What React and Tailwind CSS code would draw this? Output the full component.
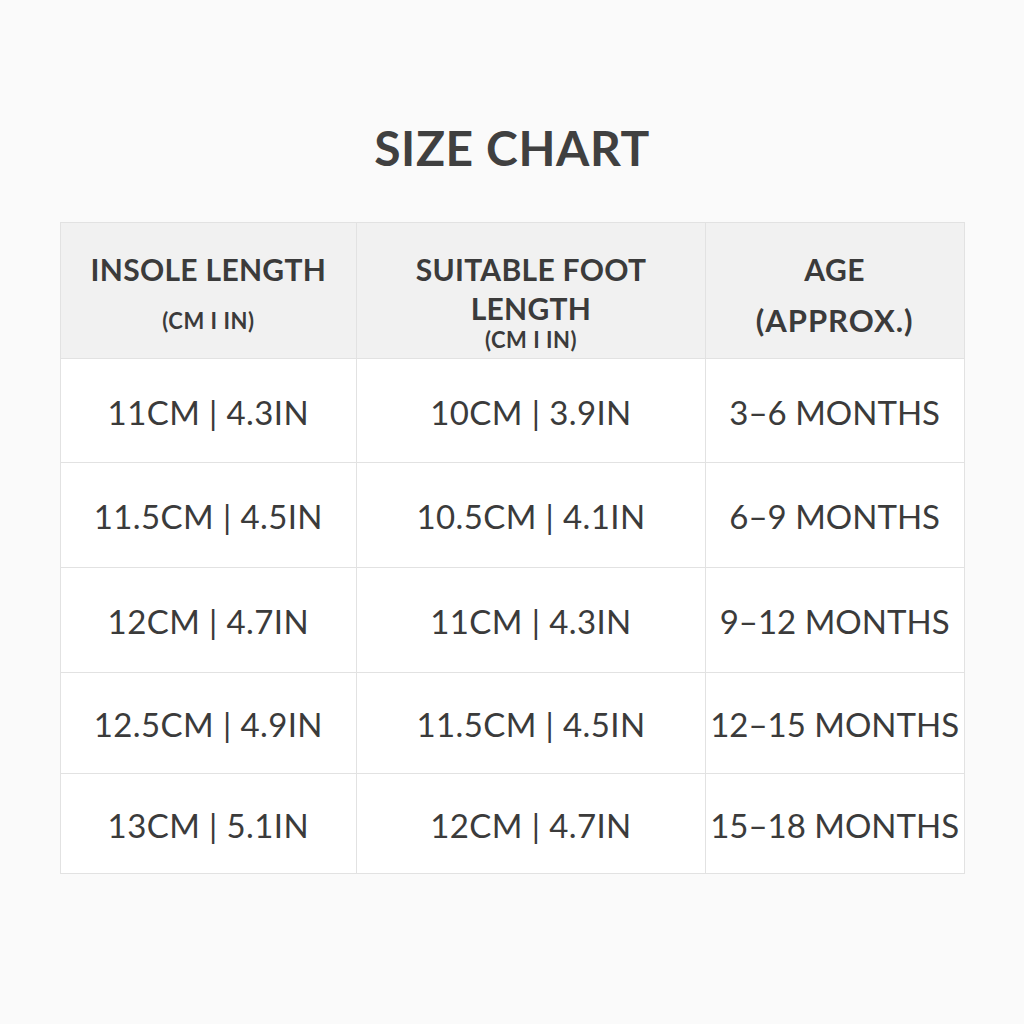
import React from "react";

const rows = [
  { h: "h-[104px]", c: ["11CM | 4.3IN", "10CM | 3.9IN", "3–6 MONTHS"] },
  { h: "h-[105px]", c: ["11.5CM | 4.5IN", "10.5CM | 4.1IN", "6–9 MONTHS"] },
  { h: "h-[105px]", c: ["12CM | 4.7IN", "11CM | 4.3IN", "9–12 MONTHS"] },
  { h: "h-[101px]", c: ["12.5CM | 4.9IN", "11.5CM | 4.5IN", "12–15 MONTHS"] },
  { h: "h-[99px]", c: ["13CM | 5.1IN", "12CM | 4.7IN", "15–18 MONTHS"] },
];

const cols = ["w-[297px]", "w-[349px]", "w-[258px]"];

const App = () => {
  return (
    <div
      className="w-[1024px] h-[1024px] bg-[#fafafa] text-[#3b3b3b] flex flex-col items-center"
      style={{ fontFamily: "Lato, 'Open Sans', sans-serif" }}
    >
      <h1 className="mt-[124px] text-[48px] font-bold leading-none tracking-[0.6px] text-[#404040]">
        SIZE CHART
      </h1>

      <div className="mt-[50px] w-[905px] border border-[#e2e2e2] bg-white">
        <div className="flex h-[136px] bg-[#f1f1f1] border-b border-[#e2e2e2]">
          <div className={`${cols[0]} border-r border-[#e2e2e2] flex flex-col items-center pt-[31px]`}>
            <span className="text-[30px] font-bold leading-none tracking-[0.3px]">INSOLE LENGTH</span>
            <span className="mt-[26px] text-[22px] font-bold leading-none tracking-[0.5px]">(CM I IN)</span>
          </div>
          <div className={`${cols[1]} border-r border-[#e2e2e2] flex flex-col items-center pt-[31px]`}>
            <span className="text-[30px] font-bold leading-none tracking-[0.3px]">SUITABLE FOOT</span>
            <span className="mt-[9px] text-[30px] font-bold leading-none tracking-[0.3px]">LENGTH</span>
            <span className="mt-[6px] text-[22px] font-bold leading-none tracking-[0.5px]">(CM I IN)</span>
          </div>
          <div className={`${cols[2]} flex flex-col items-center pt-[31px]`}>
            <span className="text-[30px] font-bold leading-none tracking-[0.5px]">AGE</span>
            <span className="mt-[21px] text-[31px] font-bold leading-none tracking-[1px]">(APPROX.)</span>
          </div>
        </div>

        {rows.map((r, i) => (
          <div
            key={i}
            className={`flex ${r.h} ${i < rows.length - 1 ? "border-b border-[#e2e2e2]" : ""}`}
          >
            {r.c.map((t, j) => (
              <div
                key={j}
                className={`${cols[j]} ${j < 2 ? "border-r border-[#e2e2e2] tracking-[0.4px]" : ""} flex items-center justify-center pt-[3px] text-[33px] leading-none`}
              >
                {t}
              </div>
            ))}
          </div>
        ))}
      </div>
    </div>
  );
};

export default App;
